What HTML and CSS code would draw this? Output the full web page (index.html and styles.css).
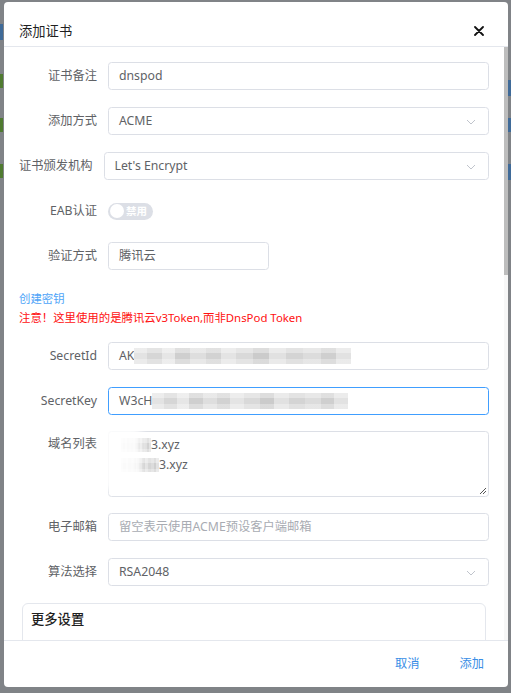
FILE: index.html
```html
<!DOCTYPE html>
<html lang="zh">
<head>
<meta charset="utf-8">
<title>添加证书</title>
<link rel="stylesheet" href="styles.css">
</head>
<body>
<div class="dialog">
  <div class="header">
    <span class="title">添加证书</span>
    <svg class="close" width="10" height="10" viewBox="0 0 10 10"><path d="M1 1L9 9M9 1L1 9" stroke="#111" stroke-width="1.8" stroke-linecap="round"/></svg>
  </div>
  <div class="body">
    <div class="row">
      <div class="label">证书备注</div>
      <div class="control"><div class="input">dnspod</div></div>
    </div>
    <div class="row">
      <div class="label">添加方式</div>
      <div class="control"><div class="input select">ACME<svg class="arrow" width="10" height="6" viewBox="0 0 10 6"><path d="M1 1L5 5L9 1" fill="none" stroke="#c0c4cc" stroke-width="1"/></svg></div></div>
    </div>
    <div class="row">
      <div class="label label-wide">证书颁发机构</div>
      <div class="control"><div class="input select">Let's Encrypt<svg class="arrow" width="10" height="6" viewBox="0 0 10 6"><path d="M1 1L5 5L9 1" fill="none" stroke="#c0c4cc" stroke-width="1"/></svg></div></div>
    </div>
    <div class="row">
      <div class="label">EAB认证</div>
      <div class="control switch-wrap"><span class="switch"><span class="knob"></span><span class="switch-text">禁用</span></span></div>
    </div>
    <div class="row">
      <div class="label">验证方式</div>
      <div class="control"><div class="input short">腾讯云</div></div>
    </div>
    <div class="notes">
      <div class="link">创建密钥</div>
      <div class="warn">注意！这里使用的是腾讯云v3Token,而非DnsPod Token</div>
    </div>
    <div class="row">
      <div class="label">SecretId</div>
      <div class="control"><div class="input">AK<span class="mosaic m-id"></span></div></div>
    </div>
    <div class="row row-key">
      <div class="label">SecretKey</div>
      <div class="control"><div class="input focus">W3cH<span class="mosaic m-key"></span></div></div>
    </div>
    <div class="row row-area">
      <div class="label">域名列表</div>
      <div class="control">
        <div class="textarea">
          <div class="line"><span class="mosaic m-dom1"></span>3.xyz</div>
          <div class="line"><span class="mosaic m-dom2"></span>3.xyz</div>
          <svg class="grip" width="8" height="8" viewBox="0 0 8 8"><path d="M7 1L1 7M7 4L4 7" stroke="#555" stroke-width="1"/></svg>
          <span class="smear"></span>
        </div>
      </div>
    </div>
    <div class="row">
      <div class="label">电子邮箱</div>
      <div class="control"><div class="input placeholder">留空表示使用ACME预设客户端邮箱</div></div>
    </div>
    <div class="row">
      <div class="label">算法选择</div>
      <div class="control"><div class="input select">RSA2048<svg class="arrow" width="10" height="6" viewBox="0 0 10 6"><path d="M1 1L5 5L9 1" fill="none" stroke="#c0c4cc" stroke-width="1"/></svg></div></div>
    </div>
    <div class="more">
      <div class="more-title">更多设置</div>
    </div>
  </div>
  <div class="scrollbar"><div class="thumb"></div></div>
  <div class="footer">
    <span class="btn">取消</span>
    <span class="btn">添加</span>
  </div>
</div>
</body>
</html>
```
FILE: styles.css
```css
html, body {
  margin: 0;
  padding: 0;
}
body {
  width: 511px;
  height: 693px;
  overflow: hidden;
  background-color: #808387;
  background-image:
    linear-gradient(to bottom, transparent 24px, #3f6a98 24px, #3f6a98 40px, transparent 40px,
      transparent 74px, #4f7a30 74px, #4f7a30 88px, transparent 88px,
      transparent 118px, #4f7a30 118px, #4f7a30 132px, transparent 132px,
      transparent 164px, #4f7a30 164px, #4f7a30 178px, transparent 178px),
    linear-gradient(to bottom, transparent 80px, #3f6a98 80px, #3f6a98 96px, transparent 96px,
      transparent 118px, #3f6a98 118px, #3f6a98 132px, transparent 132px,
      transparent 164px, #3f6a98 164px, #3f6a98 180px, transparent 180px);
  background-size: 3px 693px, 3px 693px;
  background-position: 0 0, 508px 0;
  background-repeat: no-repeat;
  font-family: "Noto Sans", "Noto Sans CJK SC", sans-serif;
}
.dialog {
  position: relative;
  margin: 2px 0 0 4px;
  width: 504px;
  height: 685px;
  background: #fff;
  border-radius: 4px;
  display: flex;
  flex-direction: column;
  overflow: hidden;
}
.header {
  flex: 0 0 auto;
  display: flex;
  align-items: center;
  justify-content: space-between;
  padding: 19px 24px 5px 15px;
  border-bottom: 1px solid #e4e7ed;
}
.title {
  font-size: 13.3px;
  line-height: 20px;
  color: #1f1f1f;
}
.close {
  display: block;
}
.body {
  flex: 1 1 auto;
  overflow: hidden;
  padding: 15px 19px 0 15px;
}
.scrollbar {
  position: absolute;
  right: 0;
  top: 45px;
  width: 4px;
  height: 593px;
  background: #f7f7f7;
}
.thumb {
  width: 4px;
  height: 228px;
  background: #bdbdbd;
}
.row {
  display: flex;
  align-items: flex-start;
  margin-bottom: 17px;
}
.label {
  flex: 0 0 auto;
  width: 78px;
  padding-right: 11px;
  text-align: right;
  white-space: nowrap;
  font-size: 12.25px;
  line-height: 28px;
  color: #606266;
}
.label-wide {
  width: auto;
}
.control {
  flex: 1 1 auto;
  min-width: 0;
}
.input {
  position: relative;
  box-sizing: border-box;
  height: 28px;
  border: 1px solid #dcdfe6;
  border-radius: 3.5px;
  padding: 0 10px;
  font-size: 12.25px;
  line-height: 26px;
  color: #606266;
  white-space: nowrap;
}
.input.short {
  width: 161px;
}
.input.focus {
  border-color: #409eff;
}
.input.placeholder {
  color: #a8abb2;
}
.arrow {
  position: absolute;
  right: 12px;
  top: 11px;
}
.switch-wrap {
  height: 28px;
  display: flex;
  align-items: center;
}
.switch {
  position: relative;
  display: inline-flex;
  align-items: center;
  width: 45px;
  height: 17px;
  border-radius: 9px;
  background: #dcdfe6;
  box-sizing: border-box;
}
.knob {
  position: absolute;
  left: 2px;
  top: 1.5px;
  width: 14px;
  height: 14px;
  border-radius: 50%;
  background: #fff;
}
.switch-text {
  position: absolute;
  left: 18px;
  top: 0;
  font-size: 10.5px;
  line-height: 17px;
  font-weight: bold;
  color: #fff;
}
.notes {
  padding-top: 2px;
  margin-bottom: 15px;
  font-size: 11.4px;
  line-height: 19px;
}
.link {
  color: #4ea4f8;
}
.warn {
  color: #ff1010;
}
.row-key {
  margin-bottom: 16px;
}
.textarea {
  position: relative;
  box-sizing: border-box;
  height: 66px;
  border: 1px solid #dcdfe6;
  border-radius: 3.5px;
  padding: 3px 10px;
  font-size: 12.25px;
  line-height: 20px;
  color: #606266;
}
.row-area {
  margin-bottom: 16px;
}
.row-area .label {
  line-height: 26px;
}
.line {
  white-space: nowrap;
}
.grip {
  position: absolute;
  right: 1px;
  bottom: 1px;
}
.smear {
  position: absolute;
  left: -8px;
  top: -7px;
  width: 40px;
  height: 66px;
  background: #fff;
  filter: blur(5px);
  opacity: 0.9;
}
.mosaic {
  display: inline-block;
  vertical-align: middle;
  height: 16px;
  margin-top: -2px;
  background-image:
    linear-gradient(to bottom, rgba(255,255,255,0.35) 0, rgba(255,255,255,0.35) 5px, transparent 5px, transparent 11px, rgba(255,255,255,0.3) 11px),
    linear-gradient(to right,
      #e3e3e3 0, #e3e3e3 6%, #d6d6d6 6%, #d6d6d6 13%, #e6e6e6 13%, #e6e6e6 19%,
      #cfcfcf 19%, #cfcfcf 26%, #dedede 26%, #dedede 33%, #d2d2d2 33%, #d2d2d2 40%,
      #e4e4e4 40%, #e4e4e4 47%, #d9d9d9 47%, #d9d9d9 55%, #cbcbcb 55%, #cbcbcb 62%,
      #e1e1e1 62%, #e1e1e1 70%, #d4d4d4 70%, #d4d4d4 78%, #dcdcdc 78%, #dcdcdc 86%,
      #cfcfcf 86%, #cfcfcf 93%, #e2e2e2 93%);
}
.m-id {
  width: 217px;
}
.m-key {
  width: 196px;
}
.m-dom1 {
  width: 30px;
  height: 14px;
  margin-left: 2px;
}
.m-dom2 {
  width: 38px;
  height: 14px;
  margin-left: 2px;
}
.more {
  margin: 0 3px;
  border: 1px solid #e4e7ed;
  border-radius: 6px;
  padding: 5px 8px 20px 8px;
  min-height: 940px;
}
.more-title {
  font-size: 13.3px;
  line-height: 20px;
  color: #1f1f1f;
  font-weight: 500;
}
.footer {
  flex: 0 0 auto;
  display: flex;
  justify-content: flex-end;
  align-items: center;
  gap: 40px;
  height: 46px;
  padding: 0 24px;
  border-top: 1px solid #e4e7ed;
}
.btn {
  font-size: 12.25px;
  line-height: 20px;
  color: #3a8ee6;
}
```
